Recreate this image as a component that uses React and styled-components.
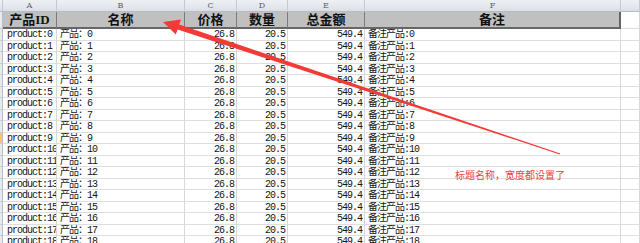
import React from "react";
import styled, { createGlobalStyle } from "styled-components";

const GlobalStyle = createGlobalStyle`
  html, body {
    margin: 0;
    padding: 0;
    background: #ffffff;
    overflow: hidden;
  }
`;

const COLS = "3px 54px 128px 52px 51px 77px 256px 1fr";

const Sheet = styled.div`
  position: relative;
  width: 640px;
  height: 243px;
  overflow: hidden;
  background: #ffffff;
`;

const LetterRow = styled.div`
  display: grid;
  grid-template-columns: ${COLS};
  height: 12px;
`;

const Letter = styled.div`
  box-sizing: border-box;
  background: linear-gradient(#eef0f3, #dce0e6);
  border-right: 1px solid #c4c9d0;
  border-bottom: 1px solid #b6bcc5;
  font-family: "DejaVu Serif", serif;
  font-size: 8px;
  line-height: 11px;
  color: #5a5f66;
  text-align: center;
`;

const TitleRow = styled.div`
  display: grid;
  grid-template-columns: ${COLS};
  height: 17px;
`;

const TitleCell = styled.div`
  box-sizing: border-box;
  background: ${(p) => (p.$blank ? "#ffffff" : "#c0c0c0")};
  border-right: ${(p) => (p.$last ? "2px solid #666" : p.$blank ? "1px solid #d4d6d9" : "1px solid #7c7c7c")};
  border-bottom: ${(p) => (p.$blank ? "1px solid #dadcde" : "2px solid #666")};
  font-family: "Liberation Serif", "Noto Sans CJK SC", serif;
  font-weight: bold;
  font-size: 13px;
  line-height: 15px;
  color: #111;
  text-align: center;
  white-space: nowrap;
  overflow: hidden;
`;

const RowHead = styled.div`
  box-sizing: border-box;
  background: ${(p) => (p.$active ? "#f6c56c" : "#e6e9ee")};
  border-right: 1px solid #b9bec6;
  border-bottom: 1px solid #c8ccd2;
`;

const DataRow = styled.div`
  display: grid;
  grid-template-columns: ${COLS};
  height: 11.5px;
`;

const Cell = styled.div`
  box-sizing: border-box;
  border-right: 1px solid #d6d8db;
  border-bottom: 1px solid #dcdee0;
  padding: ${(p) => (p.$right ? "0 2px 0 0" : p.$indent ? "0 0 0 4px" : "0 0 0 3px")};
  font-family: "Liberation Mono", "Noto Sans CJK SC", monospace;
  font-size: 10px;
  letter-spacing: -1px;
  line-height: 11px;
  color: #141414;
  text-align: ${(p) => (p.$right ? "right" : "left")};
  white-space: nowrap;
  overflow: hidden;
`;

const Callout = styled.svg`
  position: absolute;
  left: 0;
  top: 0;
  pointer-events: none;
`;

const Note = styled.div`
  position: absolute;
  left: 455px;
  top: 169px;
  font-family: "Noto Sans CJK SC", sans-serif;
  font-size: 10px;
  line-height: 12px;
  color: #f0403c;
  white-space: nowrap;
`;

const letters = ["A", "B", "C", "D", "E", "F", ""];
const titles = ["产品ID", "名称", "价格", "数量", "总金额", "备注"];
const rows = Array.from({ length: 19 }, (_, i) => i);

export default function App() {
  return (
    <Sheet>
      <GlobalStyle />
      <LetterRow>
        <Letter />
        {letters.map((l, i) => (
          <Letter key={i}>{l}</Letter>
        ))}
      </LetterRow>
      <TitleRow>
        <RowHead />
        {titles.map((t, i) => (
          <TitleCell key={t} $last={i === titles.length - 1}>
            {t}
          </TitleCell>
        ))}
        <TitleCell $blank />
      </TitleRow>
      {rows.map((i) => (
        <DataRow key={i}>
          <RowHead $active={i === 9} />
          <Cell $indent>product:{i}</Cell>
          <Cell>产品：{i}</Cell>
          <Cell $right>26.8</Cell>
          <Cell $right>20.5</Cell>
          <Cell $right>549.4</Cell>
          <Cell>备注产品:{i}</Cell>
          <Cell />
        </DataRow>
      ))}
      <Callout width="640" height="243" viewBox="0 0 640 243">
        <polygon
          fill="#f23a36"
          points="163,22 181,19.6 179.2,24.6 560.2,153.6 559.8,154.4 177.6,29.4 175.8,34.6"
        />
      </Callout>
      <Note>标题名称，宽度都设置了</Note>
    </Sheet>
  );
}
